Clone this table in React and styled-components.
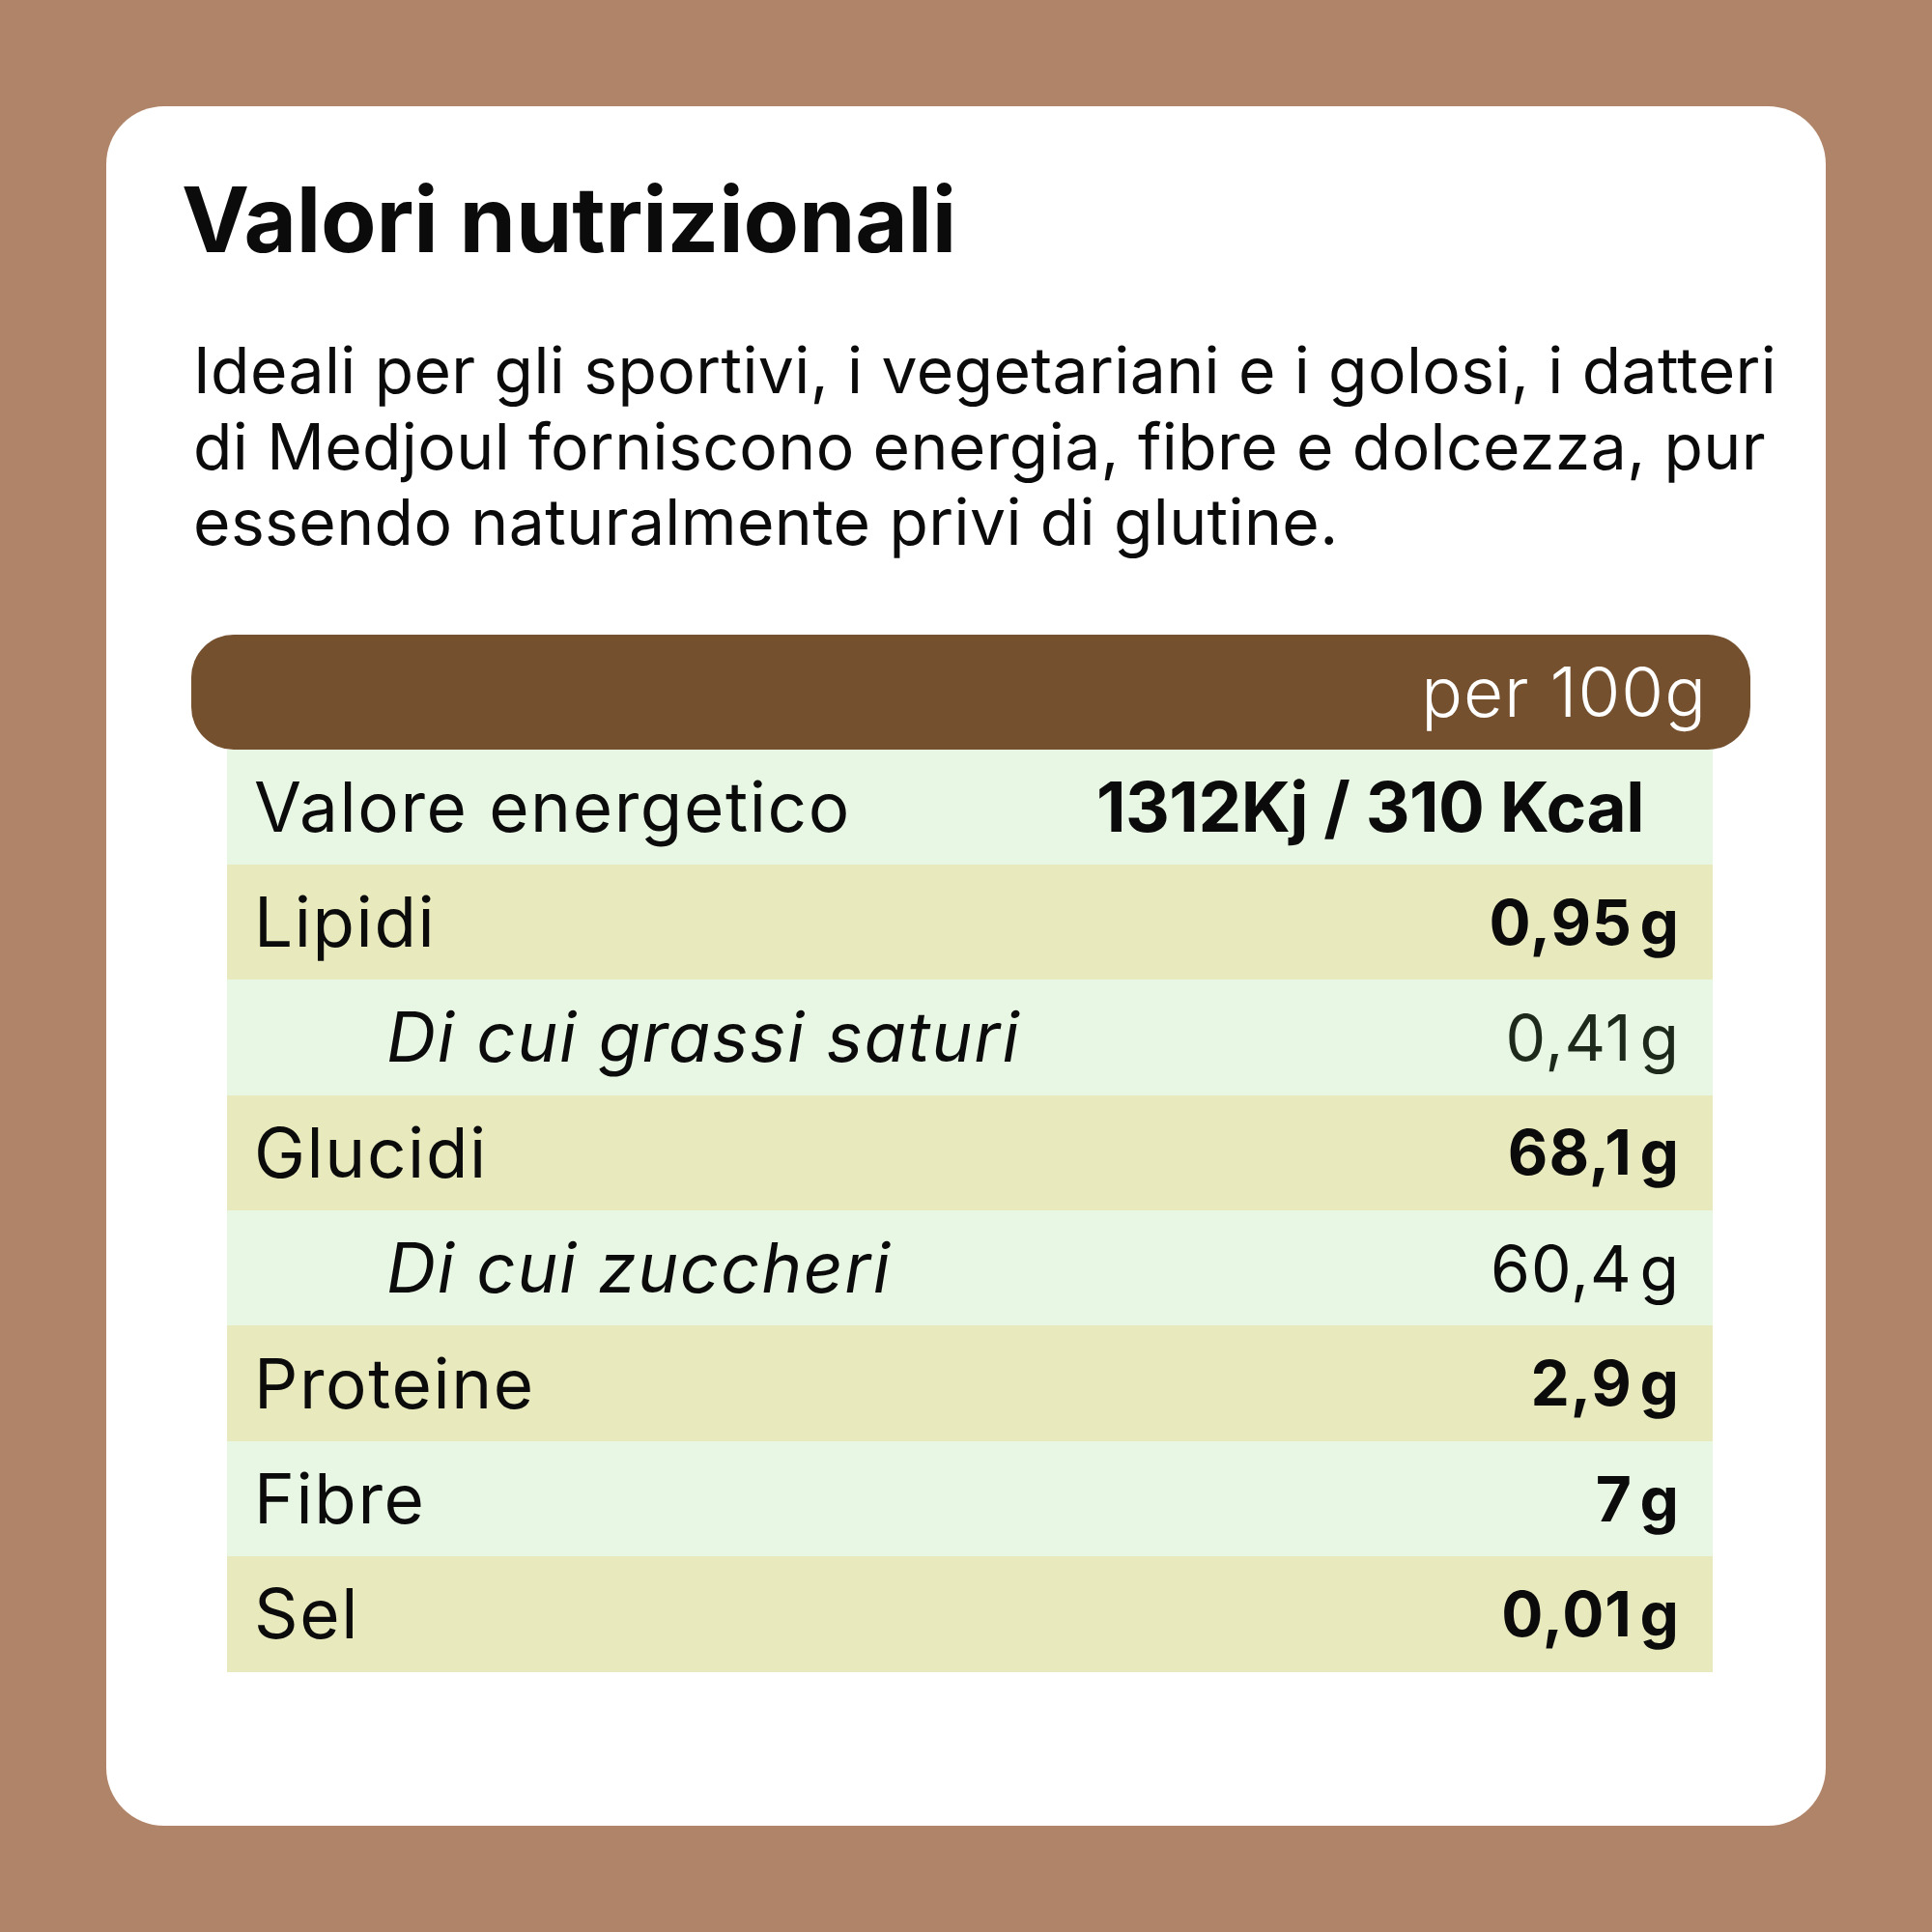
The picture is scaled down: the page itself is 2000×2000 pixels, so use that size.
import React from "react";
import styled, { createGlobalStyle } from "styled-components";

const GlobalStyle = createGlobalStyle`
  html, body {
    margin: 0;
    padding: 0;
    background: #b08468;
  }
  * {
    box-sizing: border-box;
  }
`;

const rows = [
  { label: "Valore energetico", value: "1312Kj / 310 Kcal", bold: true, energy: true },
  { label: "Lipidi", value: "0,95", unit: "g", bold: true },
  { label: "Di cui grassi saturi", value: "0,41", unit: "g", sub: true, muted: true },
  { label: "Glucidi", value: "68,1", unit: "g", bold: true },
  { label: "Di cui zuccheri", value: "60,4", unit: "g", sub: true },
  { label: "Proteine", value: "2,9", unit: "g", bold: true },
  { label: "Fibre", value: "7", unit: "g", bold: true },
  { label: "Sel", value: "0,01", unit: "g", bold: true },
];

const App = () => {
  return (
    <Page>
      <GlobalStyle />
      <Card>
        <Title>Valori nutrizionali</Title>
        <Intro>
          Ideali per gli sportivi, i vegetariani e i golosi, i datteri
          <br />
          di Medjoul forniscono energia, fibre e dolcezza, pur
          <br />
          essendo naturalmente privi di glutine.
        </Intro>
        <HeaderBar>per 100g</HeaderBar>
        <Table>
          {rows.map((row, idx) => (
            <Row key={idx} $alt={idx % 2 === 1}>
              <Label $sub={row.sub}>{row.label}</Label>
              <Value $bold={row.bold} $energy={row.energy} $muted={row.muted}>
                {row.value}
                {row.unit && <Unit>{row.unit}</Unit>}
              </Value>
            </Row>
          ))}
        </Table>
      </Card>
    </Page>
  );
};

const Page = styled.div`
  width: 2000px;
  height: 2000px;
  padding: 110px;
  background: #b08468;
  font-family: Inter, "Noto Sans", sans-serif;
  color: #0b0b0b;
`;

const Card = styled.div`
  width: 1780px;
  height: 1780px;
  background: #ffffff;
  border-radius: 60px;
  padding: 70px 78px 0 88px;
  display: flex;
  flex-direction: column;
`;

const Title = styled.h1`
  margin: 0 0 0 -10px;
  font-size: 94px;
  line-height: 1;
  font-weight: 700;
  letter-spacing: -0.2px;
`;

const Intro = styled.p`
  margin: 70px 0 0 2px;
  font-size: 66px;
  line-height: 78.5px;
  font-weight: 400;
  letter-spacing: 0.4px;
  white-space: nowrap;
`;

const HeaderBar = styled.div`
  margin-top: 77px;
  width: 1614px;
  height: 119px;
  background: #74502f;
  border-radius: 44px;
  display: flex;
  align-items: center;
  justify-content: flex-end;
  padding-right: 45px;
  color: #ffffff;
  font-size: 71px;
  font-weight: 300;
  line-height: 1;
  letter-spacing: 1px;
`;

const Table = styled.div`
  margin-left: 37px;
  width: 1538px;
  display: flex;
  flex-direction: column;
`;

const Row = styled.div`
  height: 119.4px;
  display: flex;
  align-items: center;
  justify-content: space-between;
  background: ${(p) => (p.$alt ? "#e9e9be" : "#e8f6e4")};
`;

const Label = styled.span`
  padding-left: ${(p) => (p.$sub ? "165px" : "28px")};
  font-size: 71px;
  line-height: 1;
  font-weight: 400;
  font-style: ${(p) => (p.$sub ? "italic" : "normal")};
  letter-spacing: 1.6px;
`;

const Value = styled.span`
  padding-right: ${(p) => (p.$energy ? "71px" : "34px")};
  font-size: ${(p) => (p.$energy ? "71px" : p.$bold ? "64px" : "66px")};
  line-height: 1;
  font-weight: ${(p) => (p.$bold ? 700 : 400)};
  color: ${(p) => (p.$muted ? "#1d2a1b" : "#0b0b0b")};
  letter-spacing: ${(p) => (p.$energy ? "-0.5px" : "1px")};
`;

const Unit = styled.span`
  margin-left: 0.12em;
`;

export default App;
